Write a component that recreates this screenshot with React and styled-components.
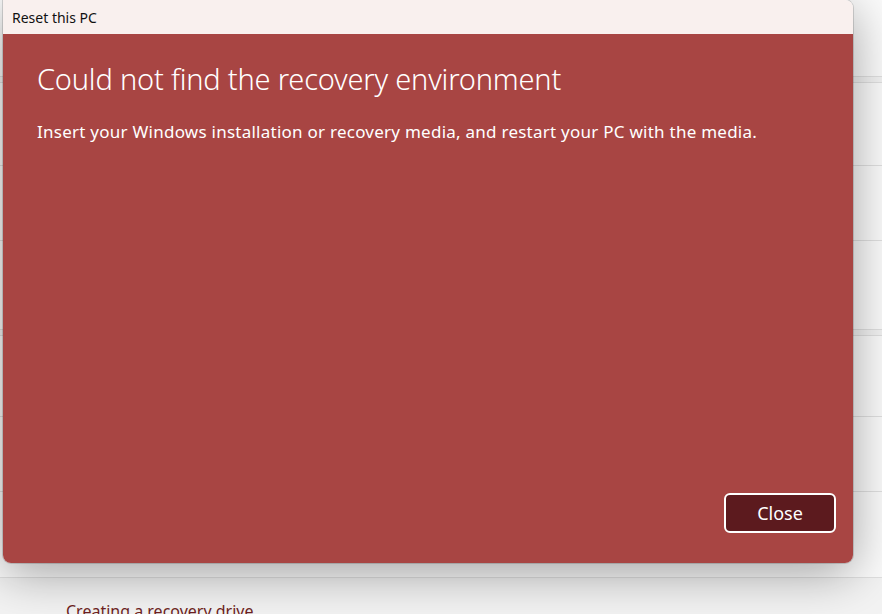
import React from "react";
import styled, { createGlobalStyle } from "styled-components";

const Global = createGlobalStyle`
  html, body {
    margin: 0;
    padding: 0;
  }
  body {
    font-family: "Noto Sans", "Open Sans", sans-serif;
    background: #f3f3f3;
  }
`;

const Screen = styled.div`
  position: relative;
  width: 882px;
  height: 614px;
  overflow: hidden;
  background: #f3f3f3;
`;

const Settings = styled.div`
  display: flex;
  flex-direction: column;
  gap: 5px;
  margin-left: -20px;
  margin-right: -20px;
`;

const Card = styled.div`
  display: flex;
  flex-direction: column;
  background: #fbfbfb;
  border-bottom: 1px solid #e0e0e0;
  border-top: ${(p) => (p.$first ? "none" : "1px solid #e0e0e0")};
`;

const Row = styled.div`
  height: ${(p) => p.$h}px;
  border-top: ${(p) => (p.$divider ? "1px solid #e0e0e0" : "none")};
  box-sizing: border-box;
`;

const Related = styled.div`
  padding: 22px 0 0 66px;
`;

const Link = styled.span`
  font-size: 16px;
  color: #6e1f22;
`;

const Dialog = styled.div`
  position: absolute;
  top: 0;
  left: 3px;
  width: 850px;
  height: 563px;
  display: flex;
  flex-direction: column;
  border-radius: 0 8px 8px 8px;
  overflow: hidden;
  box-shadow: 0 10px 50px rgba(0, 0, 0, 0.36), 0 0 0 1px rgba(0, 0, 0, 0.14);
`;

const TitleBar = styled.div`
  height: 34px;
  flex: none;
  display: flex;
  align-items: center;
  padding-left: 9px;
  background: #f9f0ee;
  font-size: 14px;
  color: #111;
`;

const Body = styled.div`
  flex: 1;
  display: flex;
  flex-direction: column;
  padding: 27px 17px 30px 34px;
  background: #a84543;
  color: #fff;
`;

const Heading = styled.h1`
  margin: 0;
  font-size: 29px;
  font-weight: 300;
  line-height: 36px;
  letter-spacing: -0.2px;
`;

const Message = styled.p`
  margin: 24px 0 0;
  font-size: 17px;
  line-height: 22px;
  font-weight: 400;
  letter-spacing: 0.25px;
`;

const Footer = styled.div`
  margin-top: auto;
  display: flex;
  justify-content: flex-end;
`;

const Button = styled.button`
  width: 112px;
  height: 40px;
  border: 2px solid #fff;
  border-radius: 6px;
  background: #5c1a1e;
  color: #fff;
  font-family: inherit;
  font-size: 18px;
`;

export default function App() {
  return (
    <Screen>
      <Global />
      <Settings>
        <Card $first>
          <Row $h={76} />
        </Card>
        <Card>
          <Row $h={82} />
          <Row $h={75} $divider />
          <Row $h={89} $divider />
        </Card>
        <Card>
          <Row $h={80} />
          <Row $h={75} $divider />
          <Row $h={86} $divider />
        </Card>
      </Settings>
      <Related>
        <Link>Creating a recovery drive</Link>
      </Related>

      <Dialog>
        <TitleBar>Reset this PC</TitleBar>
        <Body>
          <Heading>Could not find the recovery environment</Heading>
          <Message>
            Insert your Windows installation or recovery media, and restart your PC with the media.
          </Message>
          <Footer>
            <Button>Close</Button>
          </Footer>
        </Body>
      </Dialog>
    </Screen>
  );
}
